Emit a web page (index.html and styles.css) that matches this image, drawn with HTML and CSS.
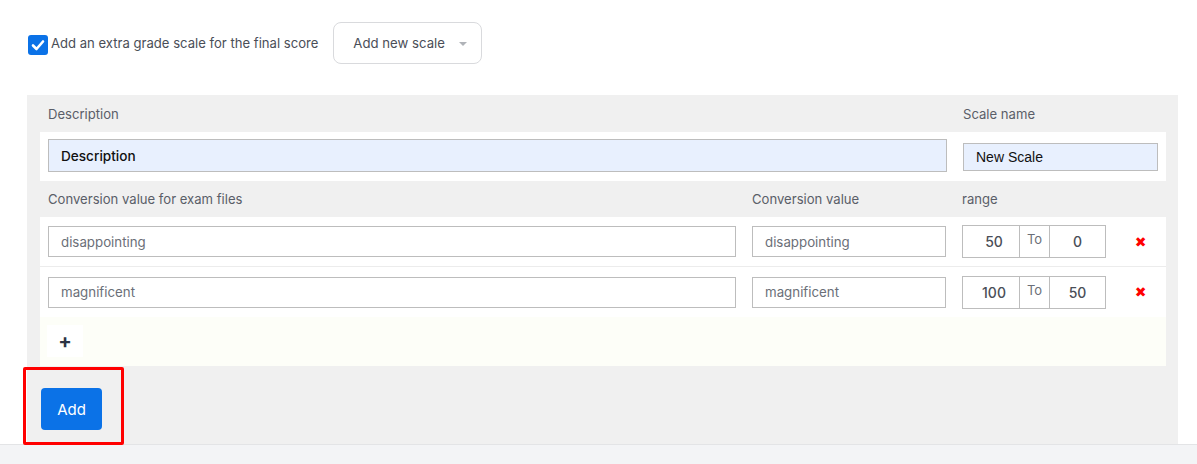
FILE: index.html
```html
<!DOCTYPE html>
<html>
<head>
<meta charset="utf-8">
<link rel="stylesheet" href="styles.css">
</head>
<body>
<div class="top">
  <label class="check">
    <span class="box"><svg viewBox="0 0 20 20" width="20" height="20"><path d="M5 10.5 L8.5 14 L15 6.5" fill="none" stroke="#fff" stroke-width="2.6" stroke-linecap="round" stroke-linejoin="round"/></svg></span>
    <span class="check-text">Add an extra grade scale for the final score</span>
  </label>
  <button class="dropdown">Add new scale <span class="caret"></span></button>
</div>

<div class="panel">
  <div class="grid g1 label-row"><div>Description</div><div>Scale name</div></div>
  <div class="grid g1 white-row r1">
    <div class="input desc">Description</div>
    <div class="input scale">New Scale</div>
  </div>
  <div class="grid g2 label-row lr2"><div>Conversion value for exam files</div><div>Conversion value</div><div>range</div><div></div></div>
  <div class="grid g2 white-row r2 sep">
    <div class="input val">disappointing</div>
    <div class="input val">disappointing</div>
    <div class="range"><span class="num">50</span><span class="to">To</span><span class="num">0</span></div>
    <div class="del">&#x2716;</div>
  </div>
  <div class="grid g2 white-row r2">
    <div class="input val">magnificent</div>
    <div class="input val">magnificent</div>
    <div class="range"><span class="num">100</span><span class="to">To</span><span class="num">50</span></div>
    <div class="del">&#x2716;</div>
  </div>
  <div class="add-row"><span class="plus">+</span></div>
  <div class="footer-area">
    <button class="add-btn">Add</button>
    <div class="highlight"></div>
  </div>
</div>
<div class="bottom"></div>
</body>
</html>
```
FILE: styles.css
```css
* { box-sizing: border-box; }
html, body { margin: 0; padding: 0; background: #fff; }
body { font-family: Inter, "Noto Sans", sans-serif; font-size: 14px; color: #4a4e57; width: 1197px; height: 464px; overflow: hidden; }

.top { height: 95px; display: flex; align-items: center; padding: 0 0 9px 28px; }
.check { display: flex; align-items: center; gap: 3px; margin-top: 4px; }
.box { width: 20px; height: 20px; background: #0b72e7; border-radius: 3px; display: flex; }
.check-text { font-size: 13.1px; color: #4a4e57; margin-top: -4px; }
.dropdown { margin-left: 15px; width: 149px; height: 42px; border: 1px solid #d9dadd; border-radius: 8px; background: #fff; font-family: Inter, sans-serif; font-size: 13.2px; color: #4a4e57; display: flex; align-items: center; padding: 0 0 0 19px; gap: 0; }
.caret { width: 0; height: 0; border-left: 4px solid transparent; border-right: 4px solid transparent; border-top: 4px solid #b0b3b8; margin-left: 14px; margin-top: 1px; }

.panel { margin-left: 27px; width: 1151px; height: 349px; background: #f0f0f0; padding: 0 12px 0 13px; position: relative; }
.grid { display: grid; padding: 0 8px; column-gap: 16px; align-items: center; }
.g1 { grid-template-columns: 899px 195px; }
.g2 { grid-template-columns: 688px 194px 145px 1fr; }
.label-row { height: 37px; color: #5a5e68; font-size: 13.1px; }
.lr2 { height: 36px; }
.white-row { background: #fff; }
.r1 { height: 49px; }
.r2 { height: 50px; }
.sep { border-bottom: 1px solid #ececec; }
.input { border: 1px solid #bdbdbd; background: #fff; display: flex; align-items: center; padding-left: 12px; }
.desc { height: 33px; background: #e8f0fe; color: #111; font-weight: 500; margin-top: -2px; font-size: 13.6px; }
.scale { height: 28px; background: #e8f0fe; color: #111; font-family: "Liberation Sans", Arial, sans-serif; font-size: 14px; }
.val { height: 31px; color: #6b6f78; font-size: 13.3px; }
.range { display: flex; height: 33px; }
.num { width: 58px; border: 1px solid #bdbdbd; display: flex; align-items: center; justify-content: center; color: #4a4e57; font-weight: 500; }
.num:first-child { width: 58px; padding-left: 6px; }
.num:last-child { width: 57px; }
.to { width: 29px; border-top: 1px solid #bdbdbd; border-bottom: 1px solid #bdbdbd; display: flex; justify-content: center; padding-top: 5px; color: #6b6f78; font-size: 13px; }
.del { color: #f00; font-size: 14px; text-align: center; padding-left: 0; font-family: "DejaVu Sans", sans-serif; }

.add-row { height: 49px; background: #fdfef8; padding: 8px 0 0 7px; }
.plus { display: flex; width: 36px; height: 32px; background: #fff; align-items: center; justify-content: center; font-size: 20px; font-weight: 700; color: #2c3344; }

.footer-area { padding: 22px 0 0 1px; position: relative; height: 78px; }
.add-btn { width: 61px; height: 42px; background: #0b72e7; color: #fff; border: none; border-radius: 4px; font-family: Inter, sans-serif; font-size: 15px; }
.highlight { position: absolute; left: -17px; top: 1px; width: 101px; height: 78px; border: 3px solid #f00; border-radius: 2px; }

.bottom { height: 20px; background: #f3f4f6; border-top: 1px solid #e3e4e6; }
```
